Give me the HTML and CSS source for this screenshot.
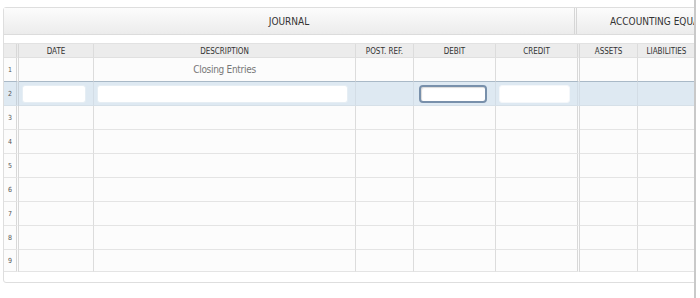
FILE: index.html
```html
<!DOCTYPE html>
<html lang="en">
<head>
  <meta charset="UTF-8">
  <title>Journal</title>
  <link rel="stylesheet" href="styles.css">
</head>
<body>

<div class="viewport">
  <div class="sheet">
    <div class="band">
      <div class="band-title journal">JOURNAL</div>
      <div class="band-title equation">ACCOUNTING EQUATION</div>
    </div>

    <div class="grid">
      <div class="row head">
        <div class="cell num"></div>
        <div class="cell">DATE</div>
        <div class="cell">DESCRIPTION</div>
        <div class="cell">POST. REF.</div>
        <div class="cell">DEBIT</div>
        <div class="cell split">CREDIT</div>
        <div class="cell">ASSETS</div>
        <div class="cell">LIABILITIES</div>
        <div class="cell"></div>
        <div class="cell"></div>
      </div>

      <div class="row">
        <div class="cell num">1</div>
        <div class="cell"></div>
        <div class="cell entry">Closing Entries</div>
        <div class="cell"></div>
        <div class="cell"></div>
        <div class="cell split"></div>
        <div class="cell"></div>
        <div class="cell"></div>
        <div class="cell"></div>
        <div class="cell"></div>
      </div>

      <div class="row active">
        <div class="cell num">2</div>
        <div class="cell"><input type="text"></div>
        <div class="cell"><input type="text"></div>
        <div class="cell"></div>
        <div class="cell"><input type="text" class="focused"></div>
        <div class="cell split"><input type="text" class="plain"></div>
        <div class="cell"></div>
        <div class="cell"></div>
        <div class="cell"></div>
        <div class="cell"></div>
      </div>

      <div class="row">
        <div class="cell num">3</div>
        <div class="cell"></div><div class="cell"></div><div class="cell"></div><div class="cell"></div>
        <div class="cell split"></div><div class="cell"></div><div class="cell"></div><div class="cell"></div><div class="cell"></div>
      </div>
      <div class="row">
        <div class="cell num">4</div>
        <div class="cell"></div><div class="cell"></div><div class="cell"></div><div class="cell"></div>
        <div class="cell split"></div><div class="cell"></div><div class="cell"></div><div class="cell"></div><div class="cell"></div>
      </div>
      <div class="row">
        <div class="cell num">5</div>
        <div class="cell"></div><div class="cell"></div><div class="cell"></div><div class="cell"></div>
        <div class="cell split"></div><div class="cell"></div><div class="cell"></div><div class="cell"></div><div class="cell"></div>
      </div>
      <div class="row">
        <div class="cell num">6</div>
        <div class="cell"></div><div class="cell"></div><div class="cell"></div><div class="cell"></div>
        <div class="cell split"></div><div class="cell"></div><div class="cell"></div><div class="cell"></div><div class="cell"></div>
      </div>
      <div class="row">
        <div class="cell num">7</div>
        <div class="cell"></div><div class="cell"></div><div class="cell"></div><div class="cell"></div>
        <div class="cell split"></div><div class="cell"></div><div class="cell"></div><div class="cell"></div><div class="cell"></div>
      </div>
      <div class="row">
        <div class="cell num">8</div>
        <div class="cell"></div><div class="cell"></div><div class="cell"></div><div class="cell"></div>
        <div class="cell split"></div><div class="cell"></div><div class="cell"></div><div class="cell"></div><div class="cell"></div>
      </div>
      <div class="row last">
        <div class="cell num">9</div>
        <div class="cell"></div><div class="cell"></div><div class="cell"></div><div class="cell"></div>
        <div class="cell split"></div><div class="cell"></div><div class="cell"></div><div class="cell"></div><div class="cell"></div>
      </div>
    </div>
  </div>
</div>

</body>
</html>
```

FILE: styles.css
```css
body {
  margin: 0;
  background: #fff;
  font-family: "DejaVu Sans Condensed", "Liberation Sans", sans-serif;
  color: #333;
}

.viewport {
  width: 694px;
  height: 298px;
  overflow: hidden;
  border-right: 2px solid #c9c9c9;
}

.sheet {
  margin: 7px 0 0 3px;
  width: 860px;
  height: 274px;
  border: 1px solid #dedede;
  border-radius: 3px;
}

.band {
  display: grid;
  grid-template-columns: 573px 1fr;
  height: 26px;
  border-bottom: 1px solid #dcdcdc;
  background: linear-gradient(#fcfcfc, #ececec);
}

.band-title {
  display: flex;
  align-items: center;
  justify-content: center;
  font-size: 10px;
  color: #333;
}

.journal {
  border-right: 3px double #d6d6d6;
}

.equation {
  justify-content: flex-start;
  padding-left: 33px;
  white-space: nowrap;
}

.grid {
  margin-top: 8px;
  border-top: 1px solid #e2e2e2;
}

.row {
  display: grid;
  grid-template-columns: 15px 75px 262px 58px 82px 84px 58px 58px 80px 1fr;
  height: 24px;
  background: #fcfcfc;
}

.row.last {
  height: 22px;
}

.cell {
  border-right: 1px solid #dcdcdc;
  border-bottom: 1px solid #e4e4e4;
  display: flex;
  align-items: center;
  justify-content: center;
}

.cell.num {
  border-right: 3px double #d8d8d8;
  font-size: 7px;
  color: #555;
}

.cell.split {
  border-right: 3px double #d8d8d8;
}

.row.head {
  height: 14px;
  background: #ececec;
  font-size: 8px;
  color: #333;
}

.row.head .cell {
  border-bottom-color: #e0e0e0;
  padding-top: 1px;
}

.entry {
  font-size: 10px;
  letter-spacing: -0.3px;
  color: #777;
}

.row.active {
  background: #dee9f2;
}

.row.active .cell {
  border-bottom-color: #d6e0e8;
  border-right-color: #d3dde6;
}

.row.active .cell.num {
  border-right-color: #c9d2da;
}

.row:nth-child(2) .cell {
  border-bottom-color: #a9b9c7;
}

input {
  box-sizing: border-box;
  width: calc(100% - 10px);
  height: 18px;
  margin: 0 7px 0 3px;
  padding: 0 4px;
  border: 1px solid #e6eef4;
  border-radius: 3px;
  background: #fff;
  font-family: inherit;
  font-size: 10px;
  outline: none;
}

input.focused {
  width: calc(100% - 13px);
  border: 2px solid #7890ab;
  border-radius: 4px;
  box-shadow: inset 1px 1px 1px rgba(0, 0, 0, 0.15);
  margin-left: 4px;
}

input.plain {
  border-color: #f4f7fa;
}
```
